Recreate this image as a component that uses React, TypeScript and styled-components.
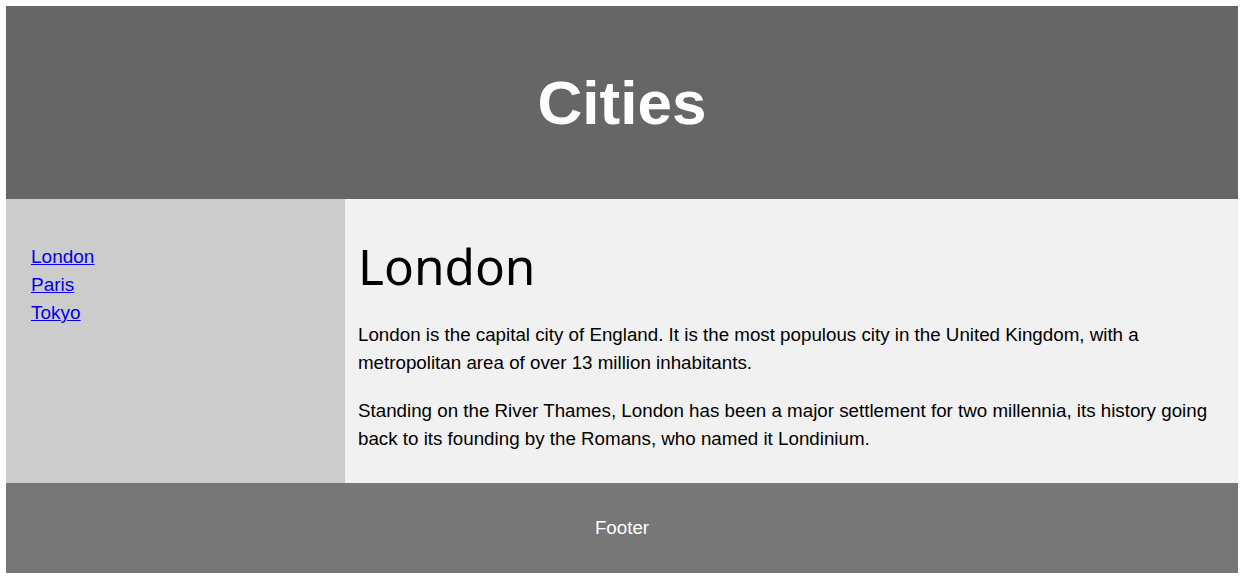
import React from "react";
import styled, { createGlobalStyle } from "styled-components";

const GlobalStyle = createGlobalStyle`
  body {
    margin: 0;
    padding: 6px 5px 7px 6px;
    font-family: "Liberation Sans", Arial, sans-serif;
    background: #ffffff;
  }
`;

const App = () => {
  return (
    <>
      <GlobalStyle />
      <Header>
        <Title>Cities</Title>
      </Header>
      <Main>
        <Nav>
          <NavList>
            <li>
              <NavLink href="#">London</NavLink>
            </li>
            <li>
              <NavLink href="#">Paris</NavLink>
            </li>
            <li>
              <NavLink href="#">Tokyo</NavLink>
            </li>
          </NavList>
        </Nav>
        <Article>
          <Heading>London</Heading>
          <Para>
            London is the capital city of England. It is the most populous city
            in the United Kingdom, with a metropolitan area of over 13 million
            inhabitants.
          </Para>
          <Para>
            Standing on the River Thames, London has been a major settlement for
            two millennia, its history going back to its founding by the Romans,
            who named it Londinium.
          </Para>
        </Article>
      </Main>
      <Footer>Footer</Footer>
    </>
  );
};

export default App;

const Header = styled.header`
  display: flex;
  align-items: center;
  justify-content: center;
  height: 193px;
  background: #666666;
`;

const Title = styled.h1`
  margin: 0;
  font-size: 62px;
  font-weight: 700;
  color: #ffffff;
`;

const Main = styled.section`
  display: flex;
`;

const Nav = styled.nav`
  flex: 0 0 339px;
  background: #cccccc;
  padding: 44px 25px 42px;
  box-sizing: border-box;
`;

const NavList = styled.ul`
  list-style: none;
  margin: 0;
  padding: 0;
  font-size: 19px;
  line-height: 28px;
`;

const NavLink = styled.a`
  color: #0000ee;
`;

const Article = styled.article`
  flex: 1;
  background: #f1f1f1;
  padding: 36px 13px 10px;
`;

const Heading = styled.h2`
  margin: 0 0 24px;
  font-family: "Noto Sans", "Open Sans", sans-serif;
  font-size: 49.5px;
  font-weight: 400;
  line-height: 62px;
  color: #000000;
`;

const Para = styled.p`
  margin: 0 0 20px;
  font-size: 18.75px;
  line-height: 28px;
  color: #000000;
`;

const Footer = styled.footer`
  display: flex;
  align-items: center;
  justify-content: center;
  height: 90px;
  background: #777777;
  color: #ffffff;
  font-size: 18.75px;
`;
